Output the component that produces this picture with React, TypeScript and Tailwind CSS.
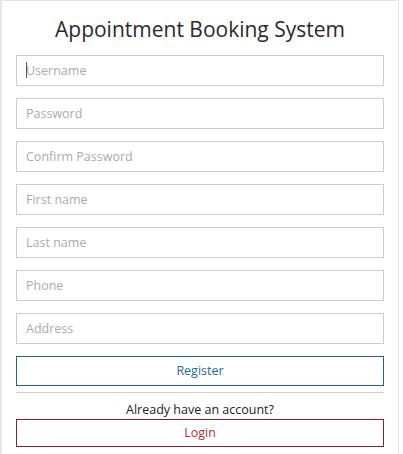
import React from "react"

const fields = ["Username", "Password", "Confirm Password", "First name", "Last name", "Phone", "Address"]

export default function App() {
  return (
    <div
      className="w-[399px] min-h-[454px] border-t border-l-2 border-r border-[#e6e6e6] bg-white px-[14px] text-[#333]"
      style={{ fontFamily: '"Segoe UI", "Open Sans", sans-serif' }}
    >
      <h1 className="pt-[10px] pb-[8px] text-center text-[21px] leading-[36px] font-normal text-[#2a2a2a]">
        Appointment Booking System
      </h1>
      <form className="flex flex-col gap-[12px]" onSubmit={(e) => e.preventDefault()}>
        {fields.map((f, i) => (
          <div key={f} className="relative">
            <input
              type={f.includes("Password") ? "password" : "text"}
              placeholder={f}
              className="block h-[31px] w-full border border-[#ccc] px-[9px] text-[12.5px] text-[#333] outline-none placeholder:text-[#aaa]"
            />
            {i === 0 && <span className="absolute left-[10px] top-[7px] h-[16px] w-[1px] bg-[#555]" />}
          </div>
        ))}
        <button
          type="submit"
          className="h-[30px] w-full border border-[#1b6399] bg-white text-[12.5px] text-[#1f6a9c]"
        >
          Register
        </button>
      </form>
      <hr className="mt-[6px] border-t border-[#cdcdcd]" />
      <p className="mt-[8px] text-center text-[12.5px] leading-[18px] text-[#222]">Already have an account?</p>
      <button className="h-[28px] w-full border border-[#8f1f22] bg-white text-[12.5px] text-[#a33]">
        Login
      </button>
    </div>
  )
}
